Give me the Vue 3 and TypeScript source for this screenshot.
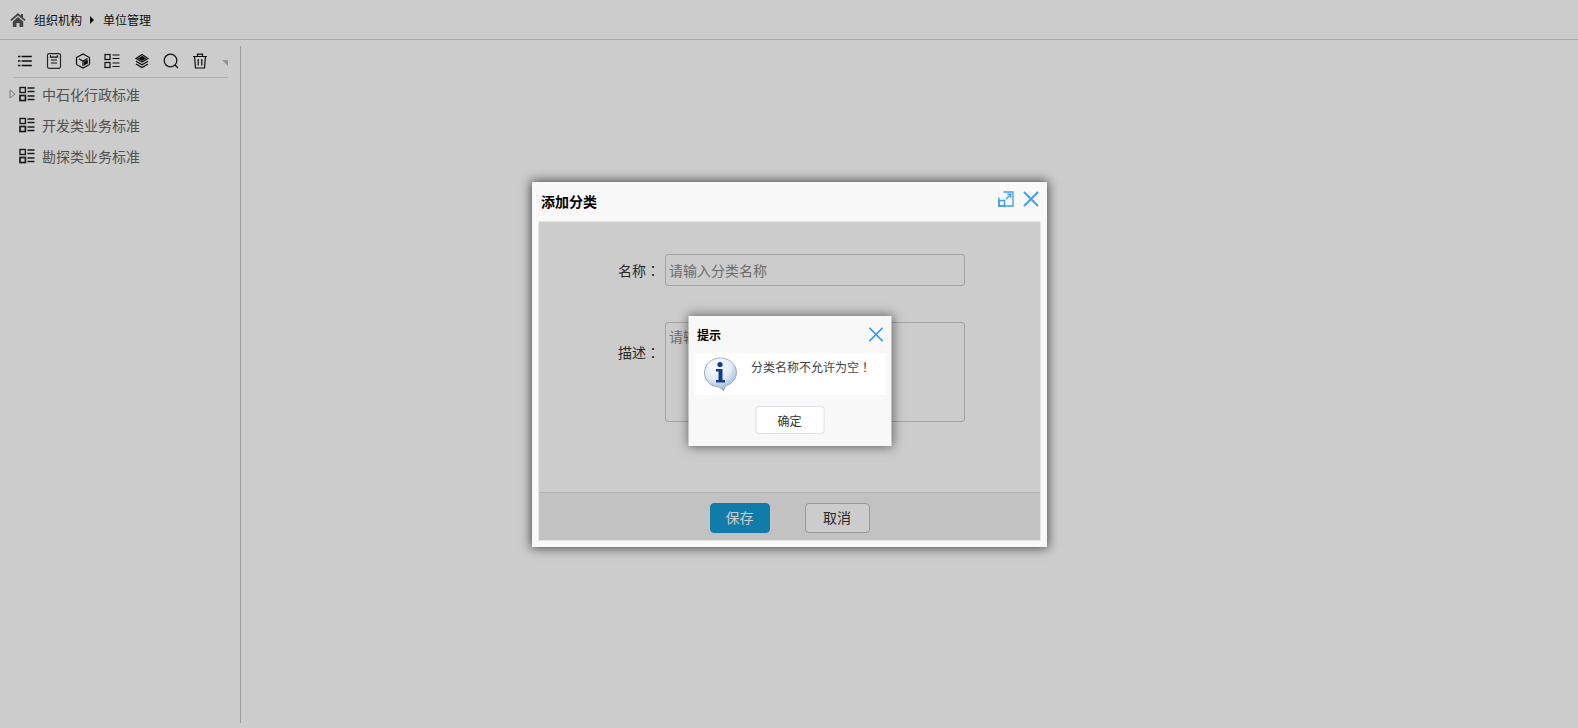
<template>
  <div class="page">
    <header class="crumbs">
      <svg class="home" viewBox="0 0 16 14" width="16" height="14">
        <path d="M8 0 L0.3 6.8 L1.5 8 L8 2.4 L14.5 8 L15.7 6.8 L13 4.4 V1 H11 V2.7 Z M2.8 8.4 V14 H6.5 V10 H9.5 V14 H13.2 V8.4 L8 4 Z" fill="#555" />
      </svg>
      <span>组织机构</span>
      <i class="crumb-arrow"></i>
      <span>单位管理</span>
    </header>

    <div class="main">
      <aside class="side">
        <div class="toolbar">
          <button v-for="t in tools" :key="t" class="tool" type="button">
            <svg viewBox="0 0 16 16" width="16" height="16" fill="none" stroke="#111" stroke-width="1.2">
              <template v-if="t === 'list'">
                <path d="M1 3.5h2.4M4.6 3.5h10.2M1 8h2.4M4.6 8h10.2M1 12.5h2.4M4.6 12.5h10.2" stroke-width="1.7" />
              </template>
              <template v-else-if="t === 'note'">
                <rect x="1.5" y="0.7" width="13" height="14.6" rx="1.5" stroke="#333" />
                <path d="M4.5 2.2 V4.2 H11.5 V2.2 M5 7h6M5 10h6" />
              </template>
              <template v-else-if="t === 'cube'">
                <path d="M8 1 L14.5 4.5 V11.5 L8 15 L1.5 11.5 V4.5 Z" />
                <path d="M4 6 L8 8 L12.5 5.5 M8 8 V13" />
                <path d="M8.8 8.5 L12.8 6.4 V10.5 L8.8 12.6 Z" fill="#111" stroke="none" />
              </template>
              <template v-else-if="t === 'tree'">
                <rect x="1" y="1.5" width="5" height="5" />
                <rect x="1" y="9.5" width="5" height="5" />
                <path d="M8.5 2h7M8.5 5.5h7M8.5 10h7M8.5 13.5h7" />
              </template>
              <template v-else-if="t === 'layers'">
                <path d="M8 1.5 L14 5.5 L8 9 L2 5.5 Z" />
                <path d="M8 3.6 L11 5.5 L8 7.2 L5 5.5 Z" fill="#111" />
                <path d="M2 8.2 L8 11.8 L14 8.2 M2 11 L8 14.6 L14 11" stroke-width="1.3" />
              </template>
              <template v-else-if="t === 'search'">
                <circle cx="7.5" cy="7.5" r="6.3" />
                <path d="M12 12 L15 15" />
              </template>
              <template v-else>
                <path d="M1 3.5h14M5.5 3.5 V1.2 H10.5 V3.5" />
                <path d="M2.5 3.5 L3.5 15 H12.5 L13.5 3.5" />
                <path d="M6.2 6v6.5M9.8 6v6.5" />
              </template>
            </svg>
          </button>
          <i class="tool-more"></i>
        </div>
        <ul class="tree">
          <li v-for="(node, i) in nodes" :key="node" class="tree-row">
            <svg class="tree-toggle" :class="{ hidden: i > 0 }" viewBox="0 0 7 10" width="7" height="10" fill="none" stroke="#999">
              <path d="M1 1 L6 5 L1 9 Z" />
            </svg>
            <svg class="tree-icon" viewBox="0 0 16 16" width="16" height="16" fill="none" stroke="#222" stroke-width="1.4">
              <rect x="1" y="1.5" width="5.4" height="5" />
              <rect x="1" y="9.5" width="5.4" height="5" stroke-width="1.7" />
              <path d="M8.5 2h7M8.5 5.5h7M8.5 10h7M8.5 13.5h7" />
            </svg>
            <span>{{ node }}</span>
          </li>
        </ul>
      </aside>
    </div>

    <div class="mask">
      <section class="dialog">
        <div class="dialog-head">
          <strong>添加分类</strong>
          <div class="dialog-actions">
            <svg viewBox="0 0 16 16" width="16" height="16" fill="none" stroke="#3c9cfd" stroke-width="1.3">
              <path d="M5.5 1 H15 V15 H1 V6.5" />
              <path d="M8 8 L12.6 3.4 M9.2 3.2 H12.8 V6.8" />
              <rect x="1" y="9.5" width="5.5" height="5.5" stroke-width="1.5" />
            </svg>
            <svg viewBox="0 0 16 16" width="16" height="16" fill="none" stroke="#3c9cfd" stroke-width="1.8">
              <path d="M1 1 L15 15 M15 1 L1 15" />
            </svg>
          </div>
        </div>

        <div class="dialog-body">
          <form class="form" @submit.prevent>
            <label class="field">
              <span class="field-label">名称<em class="punct">：</em></span>
              <input class="field-input" type="text" placeholder="请输入分类名称" />
            </label>
            <label class="field field-top">
              <span class="field-label">描述<em class="punct">：</em></span>
              <textarea class="field-area" placeholder="请输入分类描述"></textarea>
            </label>
          </form>
          <div class="dialog-foot">
            <button class="btn btn-primary" type="button">保存</button>
            <button class="btn" type="button">取消</button>
          </div>

          <div class="inner-mask"></div>
          <div class="alert">
            <div class="alert-head">
              <strong>提示</strong>
              <svg viewBox="0 0 16 16" width="15" height="15" fill="none" stroke="#3c9cfd" stroke-width="1.8">
                <path d="M1 1 L15 15 M15 1 L1 15" />
              </svg>
            </div>
            <div class="alert-msg">
              <svg class="alert-icon" viewBox="0 0 34 34" width="34" height="34">
                <defs>
                  <radialGradient id="bubble" cx="0.38" cy="0.22" r="0.9">
                    <stop offset="0" stop-color="#ffffff" />
                    <stop offset="0.5" stop-color="#e2ecf8" />
                    <stop offset="0.8" stop-color="#a9c0de" />
                    <stop offset="1" stop-color="#5f7598" />
                  </radialGradient>
                </defs>
                <path d="M17 1 C26 1 33 7.5 33 15.5 C33 22 28 27 22 29 L20 33.5 L15.5 30 C7 29.5 1 23.5 1 15.5 C1 7.5 8 1 17 1 Z" fill="url(#bubble)" stroke="#8c9cb5" stroke-width="0.8" />
                <circle cx="16.5" cy="7.5" r="2.6" fill="#12379a" />
                <path d="M12.5 12 H19 V23 H21.5 V25.5 H12.5 V23 H15 V14.5 H12.5 Z" fill="#12379a" />
              </svg>
              <span>分类名称不允许为空<em class="punct">！</em></span>
            </div>
            <div class="alert-foot">
              <button class="alert-btn" type="button">确定</button>
            </div>
          </div>
        </div>
      </section>
    </div>
  </div>
</template>

<script setup lang="ts">
const tools = ['list', 'note', 'cube', 'tree', 'layers', 'search', 'trash']
const nodes = ['中石化行政标准', '开发类业务标准', '勘探类业务标准']
</script>

<style>
html, body { margin: 0; height: 100%; background: #fff; }
</style>

<style scoped>
* { box-sizing: border-box; }
.page { position: relative; height: 728px; overflow: hidden; background: #fff; font-family: "Noto Sans CJK SC", "Liberation Sans", sans-serif; color: #333; }
.punct { font-style: normal; font-family: "Noto Sans CJK TC", sans-serif; }

.crumbs { height: 40px; border-bottom: 1px solid #d4d4d4; display: flex; align-items: center; padding-left: 10px; font-size: 12px; color: #111; }
.home { margin-right: 8px; }
.crumb-arrow { width: 0; height: 0; margin: 0 9px 0 8px; border-left: 4px solid #111; border-top: 4px solid transparent; border-bottom: 4px solid transparent; }

.main { display: flex; padding-top: 6px; }
.side { width: 241px; height: 677px; border-right: 1px solid #c4c4c4; padding: 0 12px 0 0; }
.toolbar { display: flex; align-items: center; height: 32px; margin-left: 13px; padding-bottom: 2px; border-bottom: 1px solid #ddd; }
.tool { width: 29.3px; height: 20px; padding: 0; border: 0; background: none; display: flex; align-items: center; justify-content: center; }
.tool:first-child { margin-left: -3px; }
.tool-more { margin-left: 7px; margin-top: 5px; width: 0; height: 0; border-top: 6px solid #bbb; border-left: 6px solid transparent; }

.tree { list-style: none; margin: 0; padding: 0; }
.tree-row { height: 31px; display: flex; align-items: center; font-size: 14px; color: #666; padding-left: 9px; }
.tree-icon { margin: 0 7px 0 3px; }
.tree-toggle { flex: none; }
.tree-toggle.hidden { visibility: hidden; }

.mask { position: absolute; inset: 0; background: rgba(0, 0, 0, 0.2); display: flex; align-items: center; justify-content: center; }
.dialog { width: 515px; height: 365px; margin: 1px 0 0 1px; background: #f9f9f9; box-shadow: 0 0 10px 1px rgba(0, 0, 0, 0.65); padding: 0 6px 6px; display: flex; flex-direction: column; }
.dialog-head { height: 39px; flex: none; display: flex; align-items: center; justify-content: space-between; font-size: 14px; color: #000; padding: 0 2px 1px 3px; }
.dialog-actions { display: flex; align-items: center; gap: 9px; margin-top: -4px; }

.dialog-body { position: relative; flex: 1; min-height: 0; display: flex; flex-direction: column; background: #fff; border: 1px solid #e6e6e6; }
.form { flex: 1; padding-top: 32px; }
.field { display: flex; align-items: center; font-size: 14px; }
.field-top { margin-top: 36px; align-items: flex-start; }
.field-label { width: 121px; text-align: right; margin-right: 5px; color: #333; white-space: nowrap; }
.field-top .field-label { margin-top: 20px; }
.field-input, .field-area { width: 300px; border: 1px solid #ccc; border-radius: 3px; padding: 0 3px; font: inherit; font-size: 14px; color: #333; background: #fff; outline: none; resize: none; }
.field-input { height: 32px; }
.field-area { height: 100px; padding-top: 3px; }
.field-input::placeholder, .field-area::placeholder { color: #888; opacity: 1; }

.dialog-foot { flex: none; height: 48px; background: #f3f3f3; border-top: 1px solid #dedede; display: flex; justify-content: center; align-items: flex-start; gap: 35px; padding: 10px 0 0 1px; }
.btn { width: 65px; height: 30px; border: 1px solid #bdbdbd; border-radius: 4px; background: #fff; color: #333; font: inherit; font-size: 14px; padding: 0 1px 2px 0; }
.btn-primary { width: 60px; background: #169bd5; border-color: #169bd5; color: #fff; }

.inner-mask { position: absolute; inset: 0; background: rgba(0, 0, 0, 0.2); }
.alert { position: absolute; left: 50%; top: 50%; width: 203px; height: 130px; transform: translate(-50%, -50%); background: #f8f8f8; box-shadow: 0 0 10px 1px rgba(0, 0, 0, 0.5); padding: 0 6px; display: flex; flex-direction: column; font-size: 12px; }
.alert-head { height: 37px; flex: none; display: flex; align-items: center; justify-content: space-between; color: #000; padding: 0 2px 0 3px; }
.alert-msg { height: 42px; flex: none; background: #fff; display: flex; align-items: flex-start; padding: 4px 0 0 9px; color: #444; }
.alert-icon { flex: none; margin-right: 14px; }
.alert-msg span { margin-top: 1px; white-space: nowrap; }
.alert-foot { flex: 1; display: flex; justify-content: center; padding-top: 11px; }
.alert-btn { width: 69px; height: 28px; border: 1px solid #dcdfe6; border-radius: 3px; background: #fff; color: #333; font: inherit; font-size: 12px; padding: 0; }
</style>
